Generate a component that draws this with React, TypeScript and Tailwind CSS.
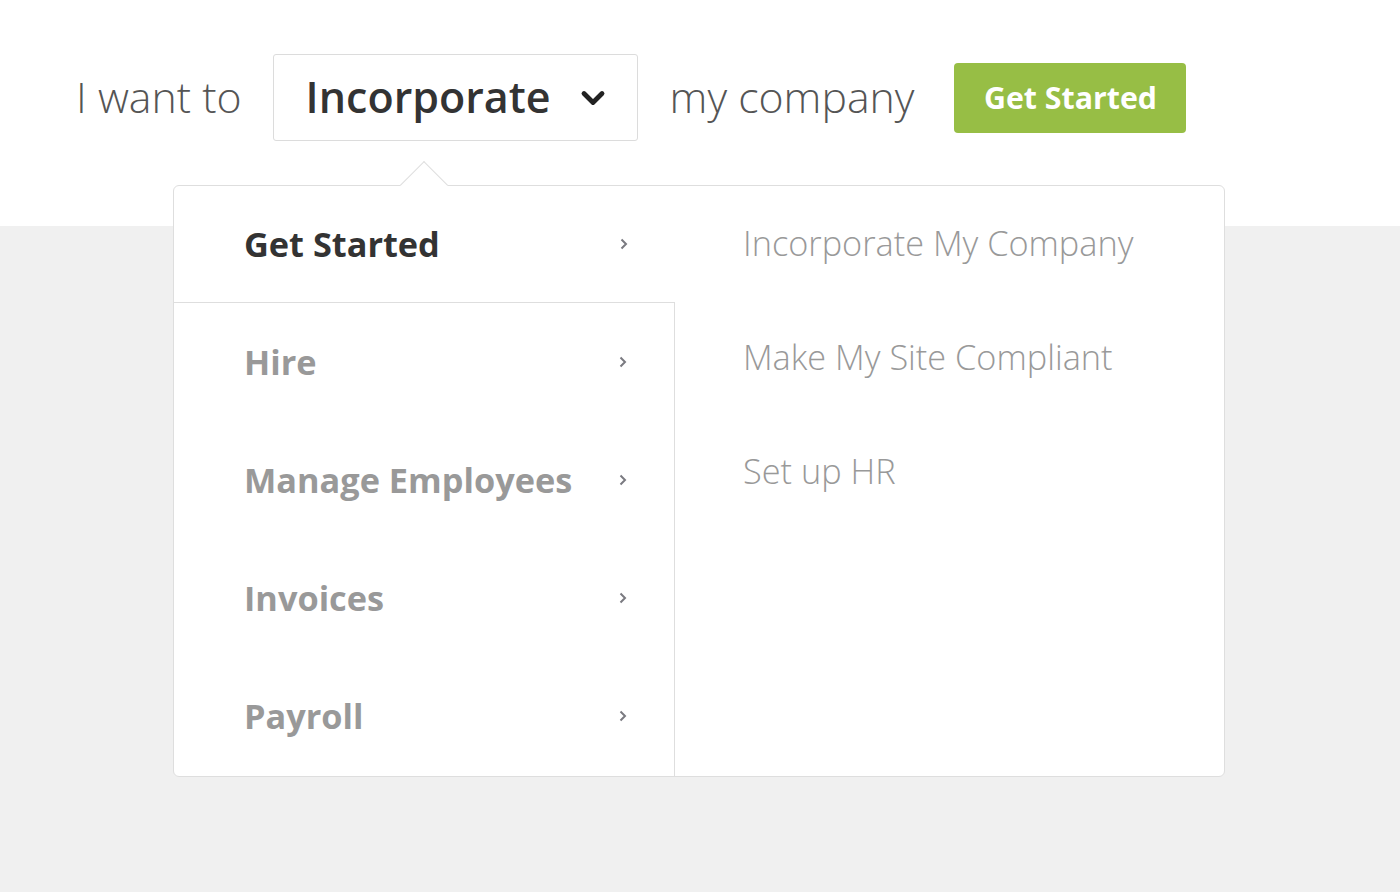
import { ChevronDown } from "lucide-react";

const font = { fontFamily: '"Open Sans", "Liberation Sans", sans-serif' };

const categories = ["Get Started", "Hire", "Manage Employees", "Invoices", "Payroll"];
const actions = ["Incorporate My Company", "Make My Site Compliant", "Set up HR"];

function Caret() {
  return (
    <svg width="10" height="14" viewBox="0 0 10 14" fill="none" className="shrink-0">
      <path d="M2.5 2.5l4.5 4.5-4.5 4.5" stroke="#7a7a80" strokeWidth="2" />
    </svg>
  );
}

function MenuItem({ label, active }: { label: string; active?: boolean }) {
  return (
    <div
      className={
        "flex items-center justify-between pl-[70px] pr-[46px] " +
        (active ? "h-[117px] border-b border-[#dedede]" : "h-[118px]")
      }
    >
      <span
        className={
          "text-[34.3px] font-bold " + (active ? "text-[#333333]" : "text-[#999999]")
        }
      >
        {label}
      </span>
      <Caret />
    </div>
  );
}

export default function App() {
  return (
    <div className="min-h-[892px] bg-[#f0f0f0]" style={font}>
      <div className="relative h-[226px] bg-white">
        <div className="flex items-center pl-[76px] pt-[54px]">
          <span className="text-[42.8px] font-light text-[#555555]">I want to</span>
          <div className="ml-[31px] flex h-[87px] w-[365px] items-center justify-between rounded-[3px] border border-[#dcdcdc] pl-[32px] pr-[26px]">
            <span className="text-[43px] font-semibold text-[#333333]">Incorporate</span>
            <ChevronDown size={36} strokeWidth={3.2} color="#222222" />
          </div>
          <span className="ml-[32px] text-[42.8px] font-light text-[#555555]">my company</span>
          <button className="ml-[40px] flex h-[70px] w-[232px] items-center justify-center rounded-[4px] bg-[#97be45] text-[30.3px] font-bold text-white">
            Get Started
          </button>
        </div>

        <div className="absolute left-[173px] top-[185px] z-10 flex h-[592px] w-[1052px] rounded-[6px] border border-[#dedede] bg-white">
          <div className="absolute left-[233px] top-[-18px] h-[34px] w-[34px] rotate-45 border-l border-t border-[#dedede] bg-white" />
          <div className="relative flex w-[501px] flex-col">
            <MenuItem label={categories[0]} active />
            <div className="flex flex-1 flex-col border-r border-[#dedede]">
              {categories.slice(1).map((c) => (
                <MenuItem key={c} label={c} />
              ))}
            </div>
          </div>
          <div className="flex flex-1 flex-col gap-[68px] pl-[68px] pt-[34px]">
            {actions.map((a) => (
              <span key={a} className="text-[34.3px] font-light leading-[46px] text-[#999999]">
                {a}
              </span>
            ))}
          </div>
        </div>
      </div>
    </div>
  );
}
